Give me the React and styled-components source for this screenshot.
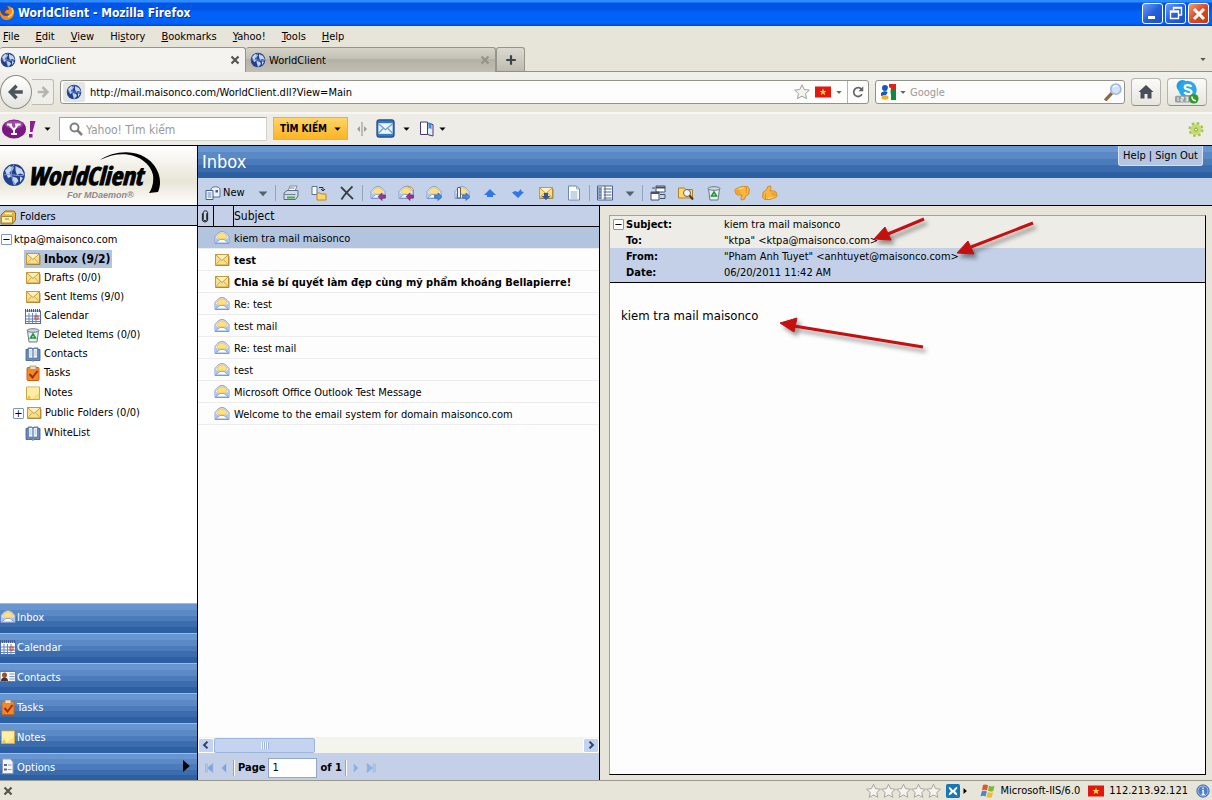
import React from 'react'
import styled, { createGlobalStyle, css } from 'styled-components'

const GlobalStyle = createGlobalStyle`
* { box-sizing: border-box; }
body {
    margin: 0;
    background: #e7e5d9;
    color: #000;
    font-family: "DejaVu Sans Condensed", "Noto Sans", sans-serif;
    font-size: 11px;
    line-height: 16px;
}
button, input {
    font: inherit;
    color: inherit;
    margin: 0;
    padding: 0;
    border: 0;
    background: none;
    outline: 0;
}
a { color: inherit; text-decoration: none; }
svg { display: block; flex: none; }
`

const envelope = (
    <>
        <rect x="1.500" y="2.500" width="13" height="10.500" fill="#fbe08a" stroke="#c39a3c" />
        <path d="M2 12.500l4.500-5M14 12.500L9.500 7.500" stroke="#d9ac48" fill="none" />
        <path d="M2 3l6 5.500L14 3" stroke="#b58526" strokeWidth=".8" fill="#fff3c4" />
        <path d="M1.500 13.500h13.500V4" stroke="#9a7a33" strokeWidth=".8" fill="none" />
    </>
)

const openMail = (
    <>
        <path d="M1 6.500C3 4 5 1.500 8 1.500s5 2.500 7 5v7H1z" fill="#e9eefa" stroke="#8a9bd0" />
        <path d="M3 6.500C4 4 6 3 8 3s4 1 5 3.500L11 9H5z" fill="#ffe27c" stroke="#e2bb52" strokeWidth=".7" />
        <path d="M1.500 7.500L6 10h4l4.500-2.500V13h-13z" fill="#a9c8f2" />
        <path d="M1.500 13L6 9.500h4l4.500 3.500z" fill="#f7fbff" stroke="#6f93d6" strokeWidth=".7" />
    </>
)

const recycle = (
    <>
        <path d="M2.500 4l1.500 11h8l1.500-11z" fill="#e9eef2" stroke="#6e7a83" />
        <ellipse cx="8" cy="3.500" rx="6" ry="1.800" fill="#cfd8df" stroke="#6e7a83" />
        <path d="M8 7l2.500 4h-5z" fill="none" stroke="#169a36" strokeWidth="1.500" />
    </>
)

const globe = (
    <>
        <circle cx="8" cy="8" r="7.300" fill="#23408f" />
        <path d="M2 5l3-3 3 1-1 2-2 1 1 3-2 1zM9 2l4 2 2 4-3-1-2 1-1-3zM7 9l3 1 1 2-3 3-1-3zM12 9l2 1-2 3z" fill="#c6d7ef" />
        <path d="M1.500 8C5 6 11 10 14.500 8M8 1c-3 4-2 10 1 14" stroke="#7b9bd2" strokeWidth=".7" fill="none" />
    </>
)

const hand = (
    <>
        <path d="M.8 5.500C1 3.500 3 3.500 4.500 2.800 6 2 7 1.500 9 1.500h4.500l2 2.500-.7 5-3 2-1.500 3.500-3 .5-.3-2.500 1-2.500-3.500.2-2.500-1.200z" fill="#fbb53c" stroke="#cf7f17" strokeWidth=".8" />
        <path d="M2 6h4M2.500 8h4M12.500 2v5.500" stroke="#d98b20" strokeWidth=".8" />
        <path d="M5 4l5-1.500" stroke="#ffdf95" />
    </>
)

const book = (
    <>
        <path d="M1 3.500h2V2h4l1 1 1-1h4v1.500h2v11H9l-1 1-1-1H1z" fill="#6c8bb8" stroke="#3c5a8c" strokeWidth=".8" />
        <path d="M3.500 2.500h3l1.500 1v9.500l-1.500-1h-3zM12.500 2.500h-3L8 3.500V13l1.500-1h3z" fill="#f4f8ff" stroke="#4f6f9f" strokeWidth=".7" />
        <path d="M4.500 5h2M4.500 7h2M4.500 9h2M9.500 5h2M9.500 7h2M9.500 9h2" stroke="#8aa5cd" strokeWidth=".8" />
    </>
)

const calendar = (
    <>
        <rect x=".5" y="3" width="15" height="12.500" fill="#fff" stroke="#4a70b0" />
        <path d="M0 2.500h16" stroke="#3f5c94" strokeWidth="3" strokeDasharray="1 1" />
        <path d="M1 8h14M1 11h14M1 13.500h14M4 5v10M7.500 5v10M11 5v10" stroke="#6485be" />
        <rect x="10" y="8" width="3" height="3" fill="none" stroke="#d8412f" />
    </>
)

const clipboard = (
    <>
        <rect x="2" y="2.500" width="12" height="13" rx="1" fill="#f08a28" stroke="#c4651c" />
        <rect x="5" y="1" width="6" height="3.500" fill="#ecdcc0" stroke="#a58a5a" strokeWidth=".7" />
        <path d="M4.500 9l3 3.500 5-6.500" fill="none" stroke="#a82710" strokeWidth="2" />
    </>
)

const note = (
    <>
        <path d="M1.500 2h13v12.500h-13z" fill="#fbe07a" stroke="#d3a93d" />
        <path d="M2 2.500h12v5L6 14H2z" fill="#ffefa6" />
        <path d="M2 14l2-4 2 3.500z" fill="#f2b93a" />
    </>
)

const folder = (
    <>
        <path d="M1 6l4-4h9l1.500 2v7l-3 4H1z" fill="#e8b640" stroke="#94701d" />
        <path d="M1.500 7.500h11V14h-11z" fill="#fff0a6" stroke="#b08a2a" />
        <path d="M5 4.500h7" stroke="#fff" strokeWidth="1.500" />
        <path d="M5 10h4" stroke="#6a7fb0" />
    </>
)

const flag = (
    <>
        <path d="M0 2.500h16v11H0z" fill="#e3170d" />
        <path d="M8 4.500l.9 2.500h2.600L9.400 8.600l.8 2.600L8 9.600l-2.200 1.600.8-2.600L4.500 7h2.600z" fill="#ffe23c" />
    </>
)

const glyphs = {
    envelope,
    openMail,
    recycle,
    globe,
    book,
    calendar,
    clipboard,
    note,
    folder,
    flag,
    firefox: (
        <>
            <circle cx="7" cy="8" r="7" fill="#2b4fa8" />
            <path d="M0 5c1 4 3 6 6 6 2 0 3-1 3-2L5 8c0-3 3-4 4-3 0-2-1-3-2-4 5 0 8 4 7 8-1 4-4 6-8 6S-1 11 0 5z" fill="#f08a1d" />
            <path d="M12 3c2 4 0 8-4 9" stroke="#ffd24a" fill="none" strokeWidth="1.500" />
        </>
    ),
    star: <path d="M8 .8l2.200 4.700 5.200.6-3.900 3.500 1.100 5.100L8 12.200l-4.600 2.500 1.100-5.100L.6 6.100l5.200-.6z" fill="#f4f3ee" stroke="#a2a19a" />,
    back: <path d="M14 8H4M8.500 2.500L3 8l5.500 5.500" fill="none" stroke="#4b545b" strokeWidth="3" />,
    forward: <path d="M2 8h10M7.500 2.500L13 8l-5.500 5.500" fill="none" stroke="#b4b4b0" strokeWidth="3" />,
    reload: (
        <>
            <path d="M12.500 10.500A5 5 0 1 1 12 5" fill="none" stroke="#646464" strokeWidth="2" />
            <path d="M14 1.500V7H8.500z" fill="#646464" />
        </>
    ),
    google: (
        <>
            <path d="M0 0h16v16H0z" fill="#fff" />
            <path d="M9 0h7v6H9z" fill="#e2231a" />
            <path d="M10 6h6v10h-5V11z" fill="#108a3c" />
            <circle cx="5" cy="4" r="3" fill="#1b57c0" />
            <path d="M1 9c2-2 5-2 7-1l-2 3-5 1z" fill="#1b57c0" />
            <ellipse cx="5" cy="13.500" rx="3.500" ry="2.200" fill="#f7b21d" />
            <path d="M8 3l3 1-1 6-3-2z" fill="#fff" />
        </>
    ),
    lens: (
        <>
            <path d="M1 15.500l6-6.500" stroke="#8b6a45" strokeWidth="2.800" />
            <circle cx="10.500" cy="5.500" r="4.500" fill="#cfe3fb" stroke="#9db8de" strokeWidth="1.500" />
            <path d="M8 4c1-2 3-2 4-1" stroke="#fff" fill="none" />
        </>
    ),
    find: (
        <>
            <circle cx="6.500" cy="6.500" r="4" fill="none" stroke="#808080" strokeWidth="2" />
            <path d="M9.500 9.500L14 14" stroke="#808080" strokeWidth="2.500" />
        </>
    ),
    home: <path d="M8 1l7.500 7h-2v6.500H9.500V10h-3v4.500H2.500V8h-2z" fill="#474e59" />,
    skype: (
        <>
            <circle cx="5" cy="4" r="4" fill="#1f9fe0" />
            <circle cx="8.500" cy="6.500" r="6" fill="#2aa9ea" />
            <path d="M11 4.500C10 3 6.500 3 6.500 4.800c0 2 4.500 1 4.500 3.200 0 1.800-3.500 1.800-4.800.2" fill="none" stroke="#fff" strokeWidth="1.500" />
            <rect x="0" y="10.500" width="10" height="4.500" rx="1" fill="#9a9c9e" />
            <path d="M2 11.500v2.500M4 11.500h1.500v1.200H4V14h1.500M7 11.500h1.500V14H7M7.200 12.700h1.300" stroke="#fff" strokeWidth=".6" fill="none" />
            <circle cx="12.500" cy="12.500" r="3.200" fill="#2f9b2d" />
            <path d="M11.300 11c0 1.500 1 2.600 2.600 2.800" stroke="#fff" fill="none" />
        </>
    ),
    gear: (
        <>
            <circle cx="8" cy="8.500" r="6" fill="none" stroke="#a6c04f" strokeWidth="3" strokeDasharray="2.500 2.200" />
            <circle cx="8" cy="8.500" r="5.500" fill="#c5dc72" />
            <circle cx="8" cy="8.500" r="1.500" fill="#f0f4dc" stroke="#8ba23c" />
        </>
    ),
    mailApp: (
        <>
            <rect x=".8" y=".8" width="14.400" height="14.400" rx="2" fill="#3777bd" stroke="#1f4a8c" />
            <path d="M2 3.500h12v9H2z" fill="#eaf4ff" />
            <path d="M2 4l6 5 6-5M2 12l4-4M14 12l-4-4" fill="none" stroke="#6d9ccf" />
        </>
    ),
    bookmark: (
        <>
            <path d="M1.500 1h7v12.500h-7z" fill="#fff" stroke="#4a3868" />
            <path d="M8.500 2.500l5.500 1v11.500l-5.500-1.500z" fill="#e5eefc" stroke="#4a3868" />
            <path d="M9.500 1.500l3 .5v6.500L11 7 9.500 8z" fill="#3d8be0" />
        </>
    ),
    splitter: (
        <>
            <path d="M8 1v14" stroke="#8d8d8a" />
            <path d="M6 5v6L3 8zM10 5v6l3-3z" fill="#9f9f9b" />
        </>
    ),
    newMail: (
        <>
            <path d="M6 4c1-3 8-3 9 0v8H6z" fill="#eef3fb" stroke="#5d7090" />
            <path d="M10.500 5h2.500v2.500h-2.500z" fill="#3b5c98" />
            <path d="M1 5.500h7v9H1z" fill="#fff" stroke="#405e93" />
            <path d="M2.500 8h4M2.500 10h4M2.500 12h4" stroke="#5f7fb5" />
        </>
    ),
    print: (
        <>
            <path d="M5 6l2-5h7l-2 5z" fill="#fff" stroke="#7c8ba2" />
            <path d="M1 8l3-2.500h11V11l-2.500 3.500H1z" fill="#d3dae5" stroke="#5f6e85" />
            <path d="M1.500 9.500h11M6.500 3h5" stroke="#6e7f98" />
            <path d="M4 12.500h8" stroke="#3eb14a" strokeWidth="2" />
        </>
    ),
    copy: (
        <>
            <path d="M1 1.500h5v8H1z" fill="#fff" stroke="#5c7296" />
            <path d="M8 2.500h4v3M10 4l2 2 2-2" fill="none" stroke="#2f2f2f" />
            <path d="M6 8h3l1 1h5v6H6z" fill="#ffd768" stroke="#b98820" />
        </>
    ),
    remove: <path d="M2 2c3 3 8 8 12 12M13.500 1.500C9 6 5 10 2.500 14.500" fill="none" stroke="#3b3e45" strokeWidth="1.800" />,
    reply: (
        <>
            {openMail}
            <path d="M8 11.500l4-3.500v2h3.500v3H12v2.500z" fill="#a2348c" stroke="#6f1e66" strokeWidth=".6" />
        </>
    ),
    replyAll: (
        <>
            <path d="M4 5c1-5 10-5 11.500 0v7H4z" fill="#ffe9a0" stroke="#bb8b2c" />
            {openMail}
            <path d="M8 11.500l4-3.500v2h3.500v3H12v2.500z" fill="#a2348c" stroke="#6f1e66" strokeWidth=".6" />
        </>
    ),
    forwardMail: (
        <>
            {openMail}
            <path d="M16 11.500L12 8v2H8.500v3H12v2.500z" fill="#4d8bdc" stroke="#2455a4" strokeWidth=".6" />
        </>
    ),
    attach: (
        <>
            {openMail}
            <path d="M3.500 3v10h3V2.500h-3" stroke="#5c5c5c" fill="#eee" />
            <path d="M16 11.500L12 8v2H8.500v3H12v2.500z" fill="#4d8bdc" stroke="#2455a4" strokeWidth=".6" />
        </>
    ),
    up: <path d="M8 4l6 6h-3v2H5v-2H2z" fill="#2f77e4" />,
    down: <path d="M8 13L2 7.500 5 6l3 1 3-3 .5 2.500L14 7z" fill="#2f77e4" />,
    saveMail: (
        <>
            {envelope}
            <path d="M8 15l-4.500-4H6V8h4v3h2.500z" fill="#31589f" />
        </>
    ),
    doc: (
        <>
            <path d="M2.500 1h8l3 3v11h-11z" fill="#fff" stroke="#7287ad" />
            <path d="M10.500 1v3h3M4.500 7h7M4.500 9h7M4.500 11h7M4.500 13h7" fill="none" stroke="#92a8cf" />
        </>
    ),
    columns: (
        <>
            <path d="M.5 1h15v14H.5z" fill="#fff" stroke="#4b628f" />
            <path d="M1 2h4v12H1z" fill="#93a9cc" />
            <path d="M8 1v14M2 4h2M2 7h2M2 10h2M2 13h2M6.500 4h8M6.500 7h8M6.500 10h8M6.500 13h8" stroke="#4b628f" />
        </>
    ),
    windows: (
        <>
            <path d="M1 7h8v8H1zM6 1h9v6H6z" fill="#fff" stroke="#44536c" />
            <path d="M1 8h8M6 2.500h9" stroke="#44536c" strokeWidth="2" />
            <path d="M2 3h3M10 9.500h5v4h-5" fill="none" stroke="#44536c" />
        </>
    ),
    search: (
        <>
            <path d="M.5 3h6l1 1.500h7V13H.5z" fill="#ffd668" stroke="#b08120" />
            <circle cx="9" cy="8" r="3.500" fill="#eaf3ff" stroke="#6d6252" />
            <path d="M11.500 10.500l3.500 4" stroke="#4b3c23" strokeWidth="2" />
        </>
    ),
    thumbDown: hand,
    thumbUp: <g transform="translate(16 16) rotate(180)">{hand}</g>,
    card: (
        <>
            <path d="M0 2.500h15.500v10H0z" fill="#f4f6fa" stroke="#6a7a97" />
            <circle cx="4.500" cy="6" r="2.500" fill="#9b4e30" />
            <path d="M1 12c0-5 7-5 7 0z" fill="#46352d" />
            <path d="M9.500 5h5M9.500 7.500h5M9.500 10h5" stroke="#7e9acb" />
        </>
    ),
    options: (
        <>
            <path d="M2.500 1h8l2.500 3v11.500H2.500z" fill="#f3f5f9" stroke="#92a0b6" />
            <path d="M4 6h3v2H4zM4 10.500h3v2H4z" fill="#5f6b7d" />
            <path d="M8 7h3.500M8 11.500h3.500" stroke="#8c9cb8" />
        </>
    ),
    clip: <path d="M10 5v7c0 2-4 2-4 0V4c0-2.500 5-2.500 5 0v8.500c0 3-6 3-6 0V5" fill="none" stroke="#000" />,
    butterfly: (
        <>
            <rect width="16" height="16" rx="2" fill="#1778b4" />
            <path d="M3 3c3 1 4 3 5 4 1-1 2-3 5-4-.5 3-1.500 4-3 5 1.500 1 2.500 2 3 5-3-1-4-2-5-4-1 2-2 3-5 4 .5-3 1.500-4 3-5C4.500 7 3.500 6 3 3z" fill="#fff" />
        </>
    ),
    xp: (
        <>
            <path d="M3 2c2-1 3-.5 5 .3L7 7.500C5 6.500 4 6.500 2 7.200z" fill="#e2562b" />
            <path d="M9 2.800c2 .8 3.500.8 5.500 0L13.300 8c-2 .8-3.300.7-5.300-.2z" fill="#79b93a" />
            <path d="M1.800 8.300c2-.8 3-.7 5 .3L5.500 13.500c-2-1-3-1-5-.3z" fill="#4c83d8" />
            <path d="M7.800 9c2 .9 3.300 1 5.300.2l-1.300 5c-2 .8-3.300.8-5.300-.2z" fill="#f4bd2d" />
        </>
    ),
    info: (
        <>
            <circle cx="8" cy="8" r="7" fill="#4d80cc" stroke="#2f569b" />
            <circle cx="8" cy="8" r="5.800" fill="none" stroke="#c9dcf6" strokeWidth=".8" />
            <path d="M8 4v2M7 7.500h1.200V12M6.500 12h3.500" fill="none" stroke="#fff" strokeWidth="1.500" />
        </>
    ),
    first: <path d="M3.500 2v12M5.500 2v12M13 2v12L6 8z" fill="#7fa3dc" stroke="#8fafdf" />,
    prev: <path d="M11 2v12L5 8z" fill="#7fa3dc" />,
    next: <path d="M5 2v12l6-6z" fill="#8fb0e2" />,
    last: <path d="M3 2v12l7-6zM11 2v12M13.500 2v12" fill="#8fb0e2" stroke="#8fafdf" />,
    chevLeft: <path d="M10 3.500L5.500 8l4.500 4.500" fill="none" stroke="#33476b" strokeWidth="2.800" />,
    chevRight: <path d="M6 3.500L10.500 8 6 12.500" fill="none" stroke="#33476b" strokeWidth="2.800" />,
    close: <path d="M4 4l8 8M12 4l-8 8" stroke="currentColor" strokeWidth="2.500" />,
    plus: <path d="M8 2.500v11M2.500 8h11" stroke="#3c4248" strokeWidth="2.500" />,
    minimize: <path d="M3 12.500h7" stroke="#fff" strokeWidth="3" />,
    restore: <path d="M5.500 5V2.500h8V10H11M2.500 6h8v7.500h-8zM2.500 7h8M5.500 3h8" fill="none" stroke="#fff" strokeWidth="1.400" />,
    yahoo: (
        <>
            <ellipse cx="12" cy="10" rx="12" ry="9.500" fill="#7b1685" />
            <ellipse cx="12" cy="5.500" rx="9" ry="4" fill="#a04aa8" />
            <path d="M5 5.500h5M13 5.500h5.500M7.500 5.500l4.500 5.500v4.500M16 5.500L12 11M9 15h6" fill="none" stroke="#fff" strokeWidth="2" />
            <path d="M28 2h5.500l-3 11h-2.500zM27 15h3.500v3.500H27z" fill="#8b1f95" />
        </>
    ),
    caret: <path d="M1 5.500h14L8 13z" fill="currentColor" />,
    play: <path d="M4 0v16l9-8z" fill="#000" />,
}

const Icon = ({ name, size = 16, width, box = '0 0 16 16' }) => (
    <svg width={width || size} height={size} viewBox={box} aria-hidden="true">{glyphs[name]}</svg>
)

const menus = [['', 'F', 'ile'], ['', 'E', 'dit'], ['', 'V', 'iew'], ['Hi', 's', 'tory'], ['', 'B', 'ookmarks'], ['', 'Y', 'ahoo!'], ['', 'T', 'ools'], ['', 'H', 'elp']]

const folders = [
    { icon: 'envelope', label: 'Inbox (9/2)', active: true },
    { icon: 'envelope', label: 'Drafts (0/0)' },
    { icon: 'envelope', label: 'Sent Items (9/0)' },
    { icon: 'calendar', label: 'Calendar' },
    { icon: 'recycle', label: 'Deleted Items (0/0)' },
    { icon: 'book', label: 'Contacts' },
    { icon: 'clipboard', label: 'Tasks', tall: true },
    { icon: 'note', label: 'Notes', tall: true },
    { icon: 'envelope', label: 'Public Folders (0/0)', tall: true, expandable: true },
    { icon: 'book', label: 'WhiteList', tall: true },
]

const shortcuts = [['openMail', 'Inbox'], ['calendar', 'Calendar'], ['card', 'Contacts'], ['clipboard', 'Tasks'], ['note', 'Notes'], ['options', 'Options']]

const messages = [
    { subject: 'kiem tra mail maisonco', selected: true },
    { subject: 'test', unread: true },
    { subject: 'Chia sẻ bí quyết làm đẹp cùng mỹ phẩm khoáng Bellapierre!', unread: true },
    { subject: 'Re: test' },
    { subject: 'test mail' },
    { subject: 'Re: test mail' },
    { subject: 'test' },
    { subject: 'Microsoft Office Outlook Test Message' },
    { subject: 'Welcome to the email system for domain maisonco.com' },
]

const headers = [
    ['Subject:', 'kiem tra mail maisonco'],
    ['To:', '"ktpa" <ktpa@maisonco.com>'],
    ['From:', '"Pham Anh Tuyet" <anhtuyet@maisonco.com>'],
    ['Date:', '06/20/2011 11:42 AM'],
]

const App = () => {
    return (
        <Window>
            <GlobalStyle />
            <TitleBar>
                <Icon name="firefox" />
                <WindowTitle>WorldClient - Mozilla Firefox</WindowTitle>
                <WindowButton aria-label="Minimize"><Icon name="minimize" /></WindowButton>
                <WindowButton aria-label="Restore"><Icon name="restore" /></WindowButton>
                <WindowButton $close aria-label="Close"><Icon name="close" size={20} /></WindowButton>
            </TitleBar>
            <MenuBar>
                {menus.map(([pre, key, rest]) => (
                    <MenuButton key={key + rest}>{pre}<u>{key}</u>{rest}</MenuButton>
                ))}
            </MenuBar>
            <TabStrip>
                <Tab $active>
                    <Icon name="globe" />
                    <TabLabel>WorldClient</TabLabel>
                    <CloseTab aria-label="Close tab"><Icon name="close" size={14} /></CloseTab>
                </Tab>
                <Tab>
                    <Icon name="globe" />
                    <TabLabel>WorldClient</TabLabel>
                    <CloseTab $dim aria-label="Close tab"><Icon name="close" size={14} /></CloseTab>
                </Tab>
                <NewTab aria-label="New tab"><Icon name="plus" size={14} /></NewTab>
                <TabMenu aria-label="All tabs"><Icon name="caret" size={6} /></TabMenu>
            </TabStrip>
            <NavBar>
                <History>
                    <BackButton aria-label="Back"><Icon name="back" size={18} /></BackButton>
                    <ForwardButton aria-label="Forward"><Icon name="forward" size={14} /></ForwardButton>
                </History>
                <AddressBox>
                    <SiteIcon><Icon name="globe" /></SiteIcon>
                    <BoxInput aria-label="Address" defaultValue="http://mail.maisonco.com/WorldClient.dll?View=Main" />
                    <Icon name="star" />
                    <Icon name="flag" />
                    <Icon name="caret" size={6} />
                    <Reload aria-label="Reload"><Icon name="reload" size={14} /></Reload>
                </AddressBox>
                <SearchBox>
                    <Icon name="google" />
                    <Icon name="caret" size={6} />
                    <BoxInput aria-label="Search" placeholder="Google" />
                    <Icon name="lens" size={18} />
                </SearchBox>
                <ChromeButton aria-label="Home"><Icon name="home" /></ChromeButton>
                <ChromeButton $wide aria-label="Skype"><Icon name="skype" size={24} /></ChromeButton>
            </NavBar>
            <YahooBar>
                <YahooButton aria-label="Yahoo!">
                    <Icon name="yahoo" width={34} size={20} box="0 0 34 20" />
                    <Icon name="caret" size={7} />
                </YahooButton>
                <YahooSearch>
                    <Icon name="find" />
                    <BoxInput $large aria-label="Yahoo! search" placeholder="Yahoo! Tìm kiếm" />
                </YahooSearch>
                <SearchButton>TÌM KIẾM <Icon name="caret" size={7} /></SearchButton>
                <Icon name="splitter" />
                <PlainButton aria-label="Mail"><Icon name="mailApp" size={19} /><Icon name="caret" size={7} /></PlainButton>
                <PlainButton $tight aria-label="Bookmarks"><Icon name="bookmark" /><Icon name="caret" size={7} /></PlainButton>
                <Spacer />
                <PlainButton aria-label="Settings"><Icon name="gear" /></PlainButton>
            </YahooBar>
            <Client>
                <Sidebar>
                    <Logo>
                        <svg width="162" height="50" viewBox="0 0 162 50" role="img" aria-label="WorldClient for MDaemon">
                            <g transform="translate(2 12) scale(1.5)">{globe}</g>
                            <path d="M100 9c28-14 50 0 53 15 1 7-1 14-4 18l9-1c4-9 2-20-5-28C140-3 114-1 100 9z" fill="#000" />
                            <LogoText x="28" y="34">WorldClient</LogoText>
                            <LogoSub x="67" y="47">For MDaemon®</LogoSub>
                        </svg>
                    </Logo>
                    <FoldersTitle><Icon name="folder" />Folders</FoldersTitle>
                    <Tree>
                        <Account><Toggle aria-label="Collapse">−</Toggle>ktpa@maisonco.com</Account>
                        {folders.map(f => (
                            <FolderRow key={f.label} $tall={f.tall}>
                                {f.expandable && <Toggle aria-label="Expand">+</Toggle>}
                                <FolderLink href="#" $active={f.active} $nested={!f.expandable}><Icon name={f.icon} />{f.label}</FolderLink>
                            </FolderRow>
                        ))}
                    </Tree>
                    <nav>
                        {shortcuts.map(([icon, label]) => (
                            <Shortcut key={label}>
                                <Icon name={icon} />
                                <ShortcutLabel>{label}</ShortcutLabel>
                                {label === 'Options' && <Icon name="play" size={12} />}
                            </Shortcut>
                        ))}
                    </nav>
                </Sidebar>
                <Main>
                    <Header>
                        <Title>Inbox</Title>
                        <UserLinks><a href="#">Help</a> | <a href="#">Sign Out</a></UserLinks>
                    </Header>
                    <Toolbar>
                        <NewButton><Icon name="newMail" />New</NewButton>
                        <ArrowButton aria-label="New options"><Icon name="caret" size={10} /></ArrowButton>
                        <Separator />
                        {['print', 'copy', 'remove'].map(n => <Tool key={n} aria-label={n}><Icon name={n} /></Tool>)}
                        <Separator />
                        {['reply', 'replyAll', 'forwardMail', 'attach', 'up', 'down', 'saveMail', 'doc'].map(n => <Tool key={n} aria-label={n}><Icon name={n} /></Tool>)}
                        <Separator />
                        <Tool aria-label="columns"><Icon name="columns" /></Tool>
                        <ArrowButton aria-label="View options"><Icon name="caret" size={10} /></ArrowButton>
                        <Separator />
                        {['windows', 'search', 'recycle', 'thumbDown', 'thumbUp'].map(n => <Tool key={n} aria-label={n}><Icon name={n} /></Tool>)}
                    </Toolbar>
                    <Panes>
                        <ListPane>
                            <MessageTable>
                                <thead>
                                    <tr>
                                        <HeadCell $width={16}><Icon name="clip" size={14} /></HeadCell>
                                        <HeadCell $width={20} />
                                        <HeadCell $last>Subject</HeadCell>
                                    </tr>
                                </thead>
                                <tbody>
                                    {messages.map((m, i) => (
                                        <MessageRow key={i} $selected={m.selected} $unread={m.unread}>
                                            <td />
                                            <td><Icon name={m.unread ? 'envelope' : 'openMail'} /></td>
                                            <td>{m.subject}</td>
                                        </MessageRow>
                                    ))}
                                </tbody>
                            </MessageTable>
                            <Spacer />
                            <ScrollBar>
                                <ScrollButton aria-label="Scroll left"><Icon name="chevLeft" size={12} /></ScrollButton>
                                <Thumb><Grip /></Thumb>
                                <Spacer />
                                <ScrollButton aria-label="Scroll right"><Icon name="chevRight" size={12} /></ScrollButton>
                            </ScrollBar>
                            <Pager>
                                <PageButton aria-label="First"><Icon name="first" size={12} /></PageButton>
                                <PageButton aria-label="Previous"><Icon name="prev" size={12} /></PageButton>
                                <PageLine />
                                <label htmlFor="page">Page</label>
                                <PageInput id="page" defaultValue="1" />
                                of 1
                                <PageLine />
                                <PageButton aria-label="Next"><Icon name="next" size={12} /></PageButton>
                                <PageButton aria-label="Last"><Icon name="last" size={12} /></PageButton>
                            </Pager>
                        </ListPane>
                        <PreviewPane>
                            <Preview>
                                <Details>
                                    {headers.map(([name, value], i) => (
                                        <DetailRow key={name} $blue={i > 1}>
                                            <ToggleSlot>{i === 0 && <Toggle aria-label="Collapse">−</Toggle>}</ToggleSlot>
                                            <dt>{name}</dt>
                                            <dd>{value}</dd>
                                        </DetailRow>
                                    ))}
                                </Details>
                                <MessageBody>kiem tra mail maisonco</MessageBody>
                                <Arrows viewBox="0 0 440 140" width="440" height="140" aria-hidden="true">
                                    <g stroke="#c4100e" strokeWidth="3" fill="#c4100e">
                                        <path d="M314 3L278 18" />
                                        <path d="M264 23l11-12 6 13z" strokeWidth="1" />
                                        <path d="M423 7L361 31" />
                                        <path d="M347 37l11-12 6 13z" strokeWidth="1" />
                                        <path d="M313 131L184 110" />
                                        <path d="M170 107l17-5-3 14z" strokeWidth="1" />
                                    </g>
                                </Arrows>
                            </Preview>
                        </PreviewPane>
                    </Panes>
                </Main>
            </Client>
            <StatusBar>
                <CloseTab aria-label="Close bar"><Icon name="close" size={14} /></CloseTab>
                <Spacer />
                <Stars>{[1, 2, 3, 4, 5].map(n => <Icon key={n} name="star" width={15} />)}</Stars>
                <Icon name="butterfly" size={14} />
                <Icon name="play" size={6} />
                <Server $first><Icon name="xp" />Microsoft-IIS/6.0</Server>
                <Server><Icon name="flag" />112.213.92.121</Server>
                <Icon name="info" size={14} />
            </StatusBar>
        </Window>
    )
}

const row = css`
display: flex;
align-items: center;
`
const blueBands = css`
background: linear-gradient(#6896d0 0 20%, #5a89c5 20% 40%, #4b7bba 40% 60%, #3b6cae 60% 80%, #2d60a3 80%);
`

const Window = styled.div`
min-height: 100vh;
display: flex;
flex-direction: column;
`
const Spacer = styled.span`
flex: 1;
`

const TitleBar = styled.header`
${row}
height: 26px;
padding-right: 3px;
gap: 2px;
color: #fff;
background: linear-gradient(#2f8bff 0 2px, #0055e5 3px, #0054e3 9px, #0062f8 12px 23px, #0048c8);
`
const WindowTitle = styled.h1`
flex: 1;
margin: 0;
font-size: 12px;
font-weight: bold;
text-shadow: 1px 1px #0a2f8c;
`
const WindowButton = styled.button`
width: 21px;
height: 21px;
display: grid;
place-items: center;
color: #fff;
border: 1px solid #fff;
border-radius: 3px;
background: ${p => p.$close ? 'linear-gradient(135deg, #f09a7c, #dc4a20 50%, #c23a12)' : 'linear-gradient(135deg, #6f9df5, #2560dc 50%, #1b50c8)'};
`
const MenuBar = styled.nav`
${row}
height: 21px;
padding-left: 3px;
gap: 16px;
`
const MenuButton = styled.button`
white-space: nowrap;
`
const TabStrip = styled.div`
${row}
height: 25px;
border-bottom: 1px solid #919180;
align-items: stretch;
`
const Tab = styled.div`
${row}
width: ${p => p.$active ? 246 : 250}px;
height: 25px;
padding: 0 2px 0 ${p => p.$active ? 0 : 4}px;
gap: 3px;
border: 1px solid #95958a;
border-width: 1px 1px 0 0;
border-radius: 3px 3px 0 0;
background: ${p => p.$active ? '#f4f3ef' : 'linear-gradient(#d6d4c8, #c2c0b5 45%, #b4b2a7 46%, #c0beb3)'};
`
const TabLabel = styled.span`
flex: 1;
padding-top: 2px;
`
const CloseTab = styled.button`
width: 16px;
display: grid;
place-items: center;
color: ${p => p.$dim ? '#93928b' : '#55544e'};
`
const NewTab = styled.button`
width: 29px;
display: grid;
place-items: center;
border: 1px solid #95958a;
border-width: 1px 1px 0 1px;
border-radius: 3px 3px 0 0;
background: linear-gradient(#dcdad0, #bebcb0);
`
const TabMenu = styled.button`
margin-left: auto;
padding-right: 6px;
color: #55544e;
`
const NavBar = styled.div`
${row}
height: 40px;
padding-right: 5px;
gap: 6px;
background: linear-gradient(#f1f0ec, #e6e4d9);
`
const History = styled.div`
${row}
width: 54px;
`
const BackButton = styled.button`
width: 32px;
height: 34px;
display: grid;
place-items: center;
border: 1px solid #8d8c82;
border-radius: 50%;
background: linear-gradient(#fff, #e4e3dc);
`
const ForwardButton = styled.button`
width: 22px;
height: 26px;
display: grid;
place-items: center;
border: 1px solid #bdbcb2;
border-left: 0;
border-radius: 0 3px 3px 0;
background: #efeee9;
`
const boxed = css`
${row}
height: 24px;
border: 1px solid #92928a;
border-radius: 3px;
background: #fdfdfd;
color: #666;
`
const AddressBox = styled.div`
${boxed}
flex: 1;
padding-left: 2px;
gap: 5px;
`
const SiteIcon = styled.span`
padding: 2px 3px;
border-radius: 2px;
background: #e5e5e1;
`
const BoxInput = styled.input`
flex: 1;
min-width: 0;
padding-top: 2px;
color: #000;
font-size: ${p => p.$large ? 12 : 11}px;
&::placeholder { color: #999; opacity: 1; }
`
const Reload = styled.button`
align-self: stretch;
width: 21px;
display: grid;
place-items: center;
border-left: 1px solid #b5b5ae;
`
const SearchBox = styled.div`
${boxed}
width: 250px;
padding: 0 2px 0 4px;
gap: 4px;
`
const ChromeButton = styled.button`
width: ${p => p.$wide ? 40 : 30}px;
height: 28px;
display: grid;
place-items: center;
border: 1px solid #b5b4ab;
border-bottom-color: #8f8e85;
border-radius: 4px;
background: linear-gradient(#fbfbf9, #e6e5de);
`
const YahooBar = styled.div`
${row}
height: 34px;
gap: 6px;
padding: 0 8px 2px 2px;
border-top: 2px solid #f7f6f2;
border-bottom: 1px solid #000;
background: #edece7;
`
const PlainButton = styled.button`
${row}
gap: ${p => p.$tight ? 4 : 8}px;
margin-left: ${p => p.$tight ? 3 : 0}px;
`
const YahooButton = styled(PlainButton)`
width: 51px;
`
const YahooSearch = styled.div`
${row}
width: 208px;
height: 24px;
padding-left: 8px;
gap: 2px;
border: 1px solid #d4d3cc;
border-top-color: #a5a49e;
border-left-color: #a5a49e;
background: #fff;
`
const SearchButton = styled.button`
${row}
width: 75px;
height: 23px;
justify-content: center;
gap: 7px;
border: 1px solid #f2b02e;
background: linear-gradient(#ffd467, #fcb424);
font-size: 10px;
font-weight: bold;
white-space: nowrap;
`

const Client = styled.div`
flex: 1;
display: flex;
`
const Sidebar = styled.aside`
width: 198px;
display: flex;
flex-direction: column;
border-right: 1px solid #000;
background: #fff;
`
const Logo = styled.div`
height: 60px;
padding-top: 5px;
border-bottom: 1px solid #000;
background: linear-gradient(#fff, #f0eee4 40%, #e9e6d8 60%, #fdfdfb);
`
const LogoText = styled.text`
font: italic bold 25px "Liberation Sans Narrow", "Open Sans Condensed", "Liberation Sans", sans-serif;
stroke: #000;
`
const LogoSub = styled.text`
font: italic bold 9px "Liberation Sans", sans-serif;
fill: #8b8b8b;
`
const FoldersTitle = styled.h2`
${row}
height: 20px;
margin: 0;
gap: 4px;
padding-top: 2px;
border-bottom: 1px solid #000;
background: #c3d0e7;
font-size: 11px;
font-weight: normal;
`
const Tree = styled.div`
flex: 1;
padding-top: 4px;
`
const Toggle = styled.button`
width: 11px;
height: 11px;
display: grid;
place-items: center;
border: 1px solid #7b98bd;
border-radius: 1px;
background: #fff;
line-height: 9px;
`
const Account = styled.div`
${row}
height: 19px;
padding-left: 1px;
gap: 2px;
`
const FolderRow = styled.div`
${row}
height: ${p => p.$tall ? 20 : 19}px;
padding-left: 13px;
`
const FolderLink = styled.a`
${row}
height: 18px;
gap: 3px;
padding: 0 2px 0 1px;
margin-left: ${p => p.$nested ? 11 : 1}px;
${p => p.$active && 'background: #b3c4de; font-size: 12px; font-weight: bold;'}
`
const Shortcut = styled.button`
${row}
width: 100%;
height: 30px;
gap: 1px;
padding: 0 5px 4px 0;
border-top: 1px solid #b9b9ab;
color: #fff;
text-align: left;
${blueBands}

&:last-child { height: 27px; padding-bottom: 2px; }
`
const ShortcutLabel = styled.span`
flex: 1;
padding-top: 3px;
`

const Main = styled.main`
flex: 1;
min-width: 0;
display: flex;
flex-direction: column;
`
const Header = styled.div`
height: 32px;
display: flex;
justify-content: space-between;
align-items: flex-start;
padding: 0 9px 0 4px;
${blueBands}
`
const Title = styled.h2`
margin: 0;
color: #fff;
font-size: 18px;
font-weight: normal;
line-height: 32px;
`
const UserLinks = styled.div`
height: 20px;
padding: 2px 4px;
border: 1px solid #d8e2f2;
border-top: 0;
border-radius: 0 0 3px 3px;
background: #b4c6e2;
`
const Toolbar = styled.div`
${row}
height: 28px;
padding: 3px 0 0 7px;
border-bottom: 1px solid #000;
background: #c3d2e9;
`
const NewButton = styled.button`
${row}
width: 47px;
gap: 2px;
`
const ArrowButton = styled.button`
width: 22px;
display: grid;
place-items: center;
color: #555f6e;
`
const Separator = styled.span`
width: 1px;
height: 16px;
margin: 0 1px;
background: #94a3be;
`
const Tool = styled.button`
width: 28px;
display: grid;
place-items: center;
`
const Panes = styled.div`
flex: 1;
display: flex;
`
const ListPane = styled.section`
width: 402px;
display: flex;
flex-direction: column;
border-right: 1px solid #000;
background: #fdfdfd;
`
const MessageTable = styled.table`
width: 100%;
table-layout: fixed;
border-collapse: separate;
border-spacing: 0;
`
const HeadCell = styled.th`
width: ${p => p.$width ? p.$width + 'px' : 'auto'};
height: 21px;
padding: 0;
border-right: ${p => p.$last ? 0 : 1}px solid #000;
border-bottom: 1px solid #000;
background: #c3d0e7;
font-size: 12px;
font-weight: normal;
text-align: left;
`
const MessageRow = styled.tr`
font-weight: ${p => p.$unread ? 'bold' : 'normal'};

td {
    height: 22px;
    padding: 0;
    border-bottom: 1px solid #ececec;
    background: ${p => p.$selected ? '#b3c4de' : '#fdfdfd'};
    white-space: nowrap;
}
td:last-child { padding-top: 2px; }
`
const ScrollBar = styled.div`
${row}
height: 16px;
background: #f4f4ef;
`
const ScrollButton = styled.button`
width: 16px;
height: 15px;
display: grid;
place-items: center;
border: 1px solid #fff;
border-radius: 2px;
background: #c3d3f0;
`
const Thumb = styled.div`
width: 101px;
height: 15px;
display: grid;
place-items: center;
border: 1px solid #9db5dd;
border-radius: 2px;
background: #c3d3f0;
`
const Grip = styled.span`
width: 8px;
height: 7px;
background: repeating-linear-gradient(90deg, #f4f8ff 0 1px, #9fb5dc 1px 2px);
`
const Pager = styled.div`
${row}
height: 27px;
padding: 2px 5px 0;
gap: 3px;
background: #c3d0e7;
font-weight: bold;
`
const PageButton = styled.button`
width: 12px;
`
const PageLine = styled.span`
width: 2px;
height: 16px;
border-left: 1px solid #93a5c6;
background: #fff;
`
const PageInput = styled.input`
width: 49px;
height: 20px;
padding-left: 3px;
border: 1px solid #8fa7cf;
background: #fff;
font-weight: normal;
`
const PreviewPane = styled.section`
flex: 1;
min-width: 0;
display: flex;
padding: 9px 6px 5px 9px;
`
const Preview = styled.article`
position: relative;
flex: 1;
border: 1px solid #000;
border-top-color: #a3a39b;
border-left-color: #a3a39b;
background: #fdfdfd;
`
const Details = styled.dl`
margin: 0;
border-bottom: 1px solid #000;
background: #edece7;
`
const DetailRow = styled.div`
display: grid;
grid-template-columns: 13px 98px 1fr;
padding: 2px 0 0 3px;
line-height: 14px;
background: ${p => p.$blue ? '#c3d0e7' : '#edece7'};
&:last-child { padding-bottom: 2px; }

dt { font-weight: bold; }
dd { margin: 0; }
`
const ToggleSlot = styled.span`
padding-top: 1px;
`
const MessageBody = styled.p`
margin: 25px 11px;
font-size: 13px;
`
const Arrows = styled.svg`
position: absolute;
top: 0;
left: 0;
filter: drop-shadow(3px 4px 2px rgba(0, 0, 0, .4));
`

const StatusBar = styled.footer`
${row}
height: 20px;
padding-right: 2px;
gap: 2px;
border-top: 1px solid #9a998c;
background: #e7e5d9;
`
const Stars = styled.div`
display: flex;
margin-right: 3px;
`
const Server = styled.span`
${row}
gap: 5px;
margin: 0 6px 0 ${p => p.$first ? 10 : 0}px;
`

export default App
